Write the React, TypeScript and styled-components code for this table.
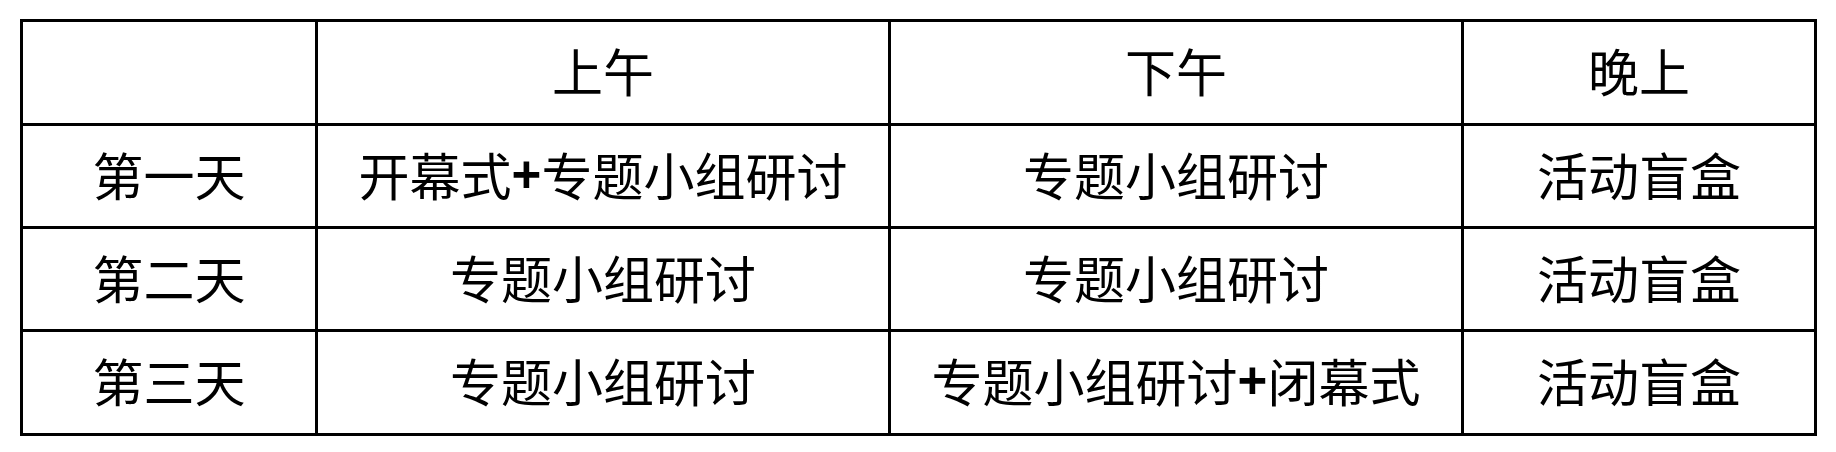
import { Fragment } from "react";
import styled, { createGlobalStyle } from "styled-components";

const GlobalStyle = createGlobalStyle`
  html, body {
    margin: 0;
    padding: 0;
    background: #ffffff;
  }
`;

const Page = styled.div`
  padding: 19px 0 0 20px;
`;

const Schedule = styled.div`
  display: grid;
  grid-template-columns: 295px 573px 573px 353px;
  grid-template-rows: 104px 103px 103px 104px;
  width: 1797px;
  box-sizing: border-box;
  border-left: 3px solid #000;
  border-top: 3px solid #000;
  font-family: "Noto Sans CJK SC", sans-serif;
  font-size: 51px;
  color: #000;
`;

const Cell = styled.div`
  box-sizing: border-box;
  border-right: 3px solid #000;
  border-bottom: 3px solid #000;
  padding-bottom: 4px;
  display: flex;
  align-items: center;
  justify-content: center;
  white-space: nowrap;
  line-height: 1;
`;

const Plus = styled.span`
  font-family: "Liberation Sans", Arial, sans-serif;
  font-weight: bold;
`;

type Row = { day: string; cells: string[] };

const header = ["", "上午", "下午", "晚上"];

const rows: Row[] = [
  { day: "第一天", cells: ["开幕式+专题小组研讨", "专题小组研讨", "活动盲盒"] },
  { day: "第二天", cells: ["专题小组研讨", "专题小组研讨", "活动盲盒"] },
  { day: "第三天", cells: ["专题小组研讨", "专题小组研讨+闭幕式", "活动盲盒"] },
];

const renderText = (text: string) => {
  const parts = text.split("+");
  return parts.map((part, i) => (
    <Fragment key={i}>
      {i > 0 && <Plus>+</Plus>}
      {part}
    </Fragment>
  ));
};

const App = () => {
  return (
    <>
      <GlobalStyle />
      <Page>
        <Schedule>
          {header.map((h, i) => (
            <Cell key={"h" + i}>{h}</Cell>
          ))}
          {rows.map((row) => (
            <Fragment key={row.day}>
              <Cell>{row.day}</Cell>
              {row.cells.map((c, j) => (
                <Cell key={j}>{renderText(c)}</Cell>
              ))}
            </Fragment>
          ))}
        </Schedule>
      </Page>
    </>
  );
};

export default App;
